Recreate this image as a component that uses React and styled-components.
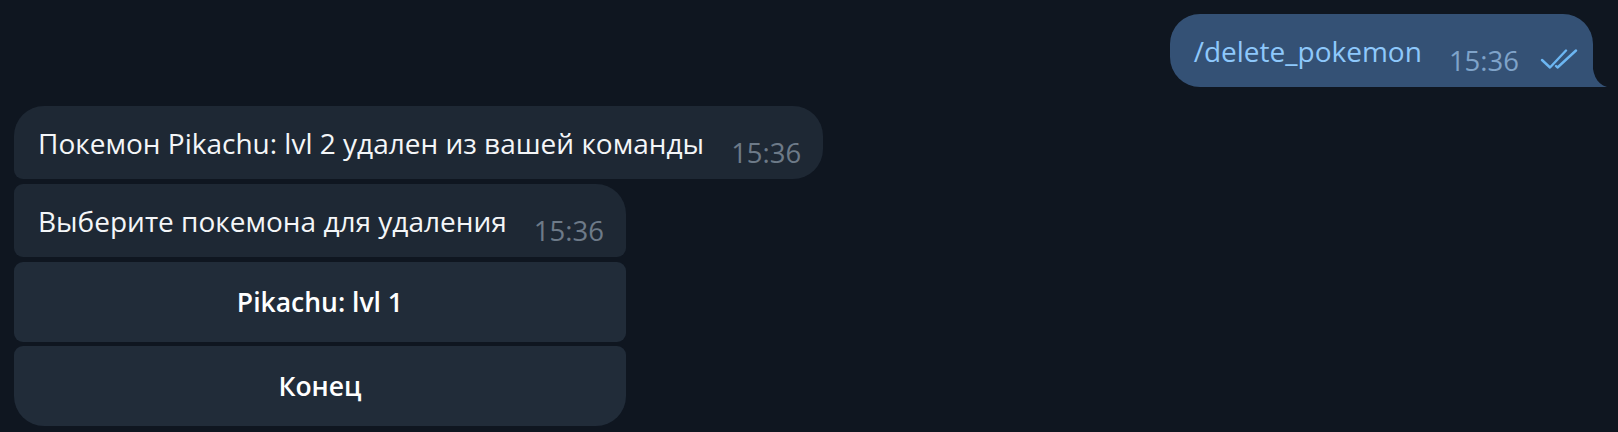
import React from "react";
import styled, { createGlobalStyle } from "styled-components";

const Global = createGlobalStyle`
    html, body {
        margin: 0;
        background: #0f1620;
    }
    body {
        font-family: "Open Sans", "Noto Sans", sans-serif;
        -webkit-font-smoothing: antialiased;
    }
`;

const Chat = styled.div`
    box-sizing: border-box;
    width: 1618px;
    height: 432px;
    padding: 14px 25px 0 14px;
    display: flex;
    flex-direction: column;
    overflow: hidden;
`;

const OutRow = styled.div`
    display: flex;
    justify-content: flex-end;
`;

const Bubble = styled.div`
    position: relative;
    display: flex;
    align-items: flex-end;
    padding: 19px ${(p) => p.$padRight || 22}px 15px 24px;
    background: ${(p) => (p.$out ? "#345175" : "#1e2834")};
    border-radius: ${(p) => p.$radius};
`;

const Text = styled.span`
    font-size: 28px;
    line-height: 36px;
    margin-bottom: 3px;
    white-space: nowrap;
    color: ${(p) => (p.$out ? "#8ec8fb" : "#f4f6f8")};
`;

const Time = styled.span`
    font-size: 27.5px;
    line-height: 20px;
    margin-left: 27px;
    margin-bottom: 1px;
    white-space: nowrap;
    color: ${(p) => (p.$out ? "#7fa3c9" : "#6d7a88")};
`;

const Checks = styled.svg`
    width: 38px;
    height: 20px;
    margin-left: 21px;
    margin-bottom: 3px;
    flex: none;
`;

const Tail = styled.svg`
    position: absolute;
    right: -14px;
    bottom: 0;
    width: 15px;
    height: 30px;
`;

const Group = styled.div`
    margin-top: 19px;
    display: flex;
    flex-direction: column;
    align-items: flex-start;
    gap: 5px;
`;

const WithKeyboard = styled.div`
    display: flex;
    flex-direction: column;
    gap: 5px;
`;

const Keyboard = styled.div`
    display: flex;
    flex-direction: column;
    gap: 4px;
`;

const KeyButton = styled.div`
    height: 80px;
    display: flex;
    align-items: center;
    justify-content: center;
    background: #212c39;
    color: #ffffff;
    font-size: 26.5px;
    font-weight: 600;
    border-radius: ${(p) => p.$radius};
`;

const BIG = 30;
const SMALL = 9;

export default function App() {
    return (
        <>
            <Global />
            <Chat>
                <OutRow>
                    <Bubble $out $padRight={15} $radius={`${BIG}px ${BIG}px 0 ${BIG}px`}>
                        <Text $out>/delete_pokemon</Text>
                        <Time $out>15:36</Time>
                        <Checks viewBox="0 0 38 20" fill="none" stroke="#6cb6f2" strokeWidth="2.4" strokeLinecap="round" strokeLinejoin="round">
                            <path d="M2 11 L10 18.5 L26 1.5" />
                            <path d="M16 17 L17.5 18.5 L36 1.5" />
                        </Checks>
                        <Tail viewBox="0 0 15 30">
                            <path d="M0 0 C0 16 4 27 15 30 L0 30 Z" fill="#345175" />
                        </Tail>
                    </Bubble>
                </OutRow>
                <Group>
                    <Bubble $radius={`${BIG}px ${BIG}px ${BIG}px ${SMALL}px`}>
                        <Text>Покемон Pikachu: lvl 2 удален из вашей команды</Text>
                        <Time>15:36</Time>
                    </Bubble>
                    <WithKeyboard>
                        <Bubble $radius={`${SMALL}px ${BIG}px ${SMALL}px ${SMALL}px`}>
                            <Text>Выберите покемона для удаления</Text>
                            <Time>15:36</Time>
                        </Bubble>
                        <Keyboard>
                            <KeyButton $radius={`${SMALL}px`}>Pikachu: lvl 1</KeyButton>
                            <KeyButton $radius={`${SMALL}px ${SMALL}px ${BIG}px ${BIG}px`}>Конец</KeyButton>
                        </Keyboard>
                    </WithKeyboard>
                </Group>
            </Chat>
        </>
    );
}
